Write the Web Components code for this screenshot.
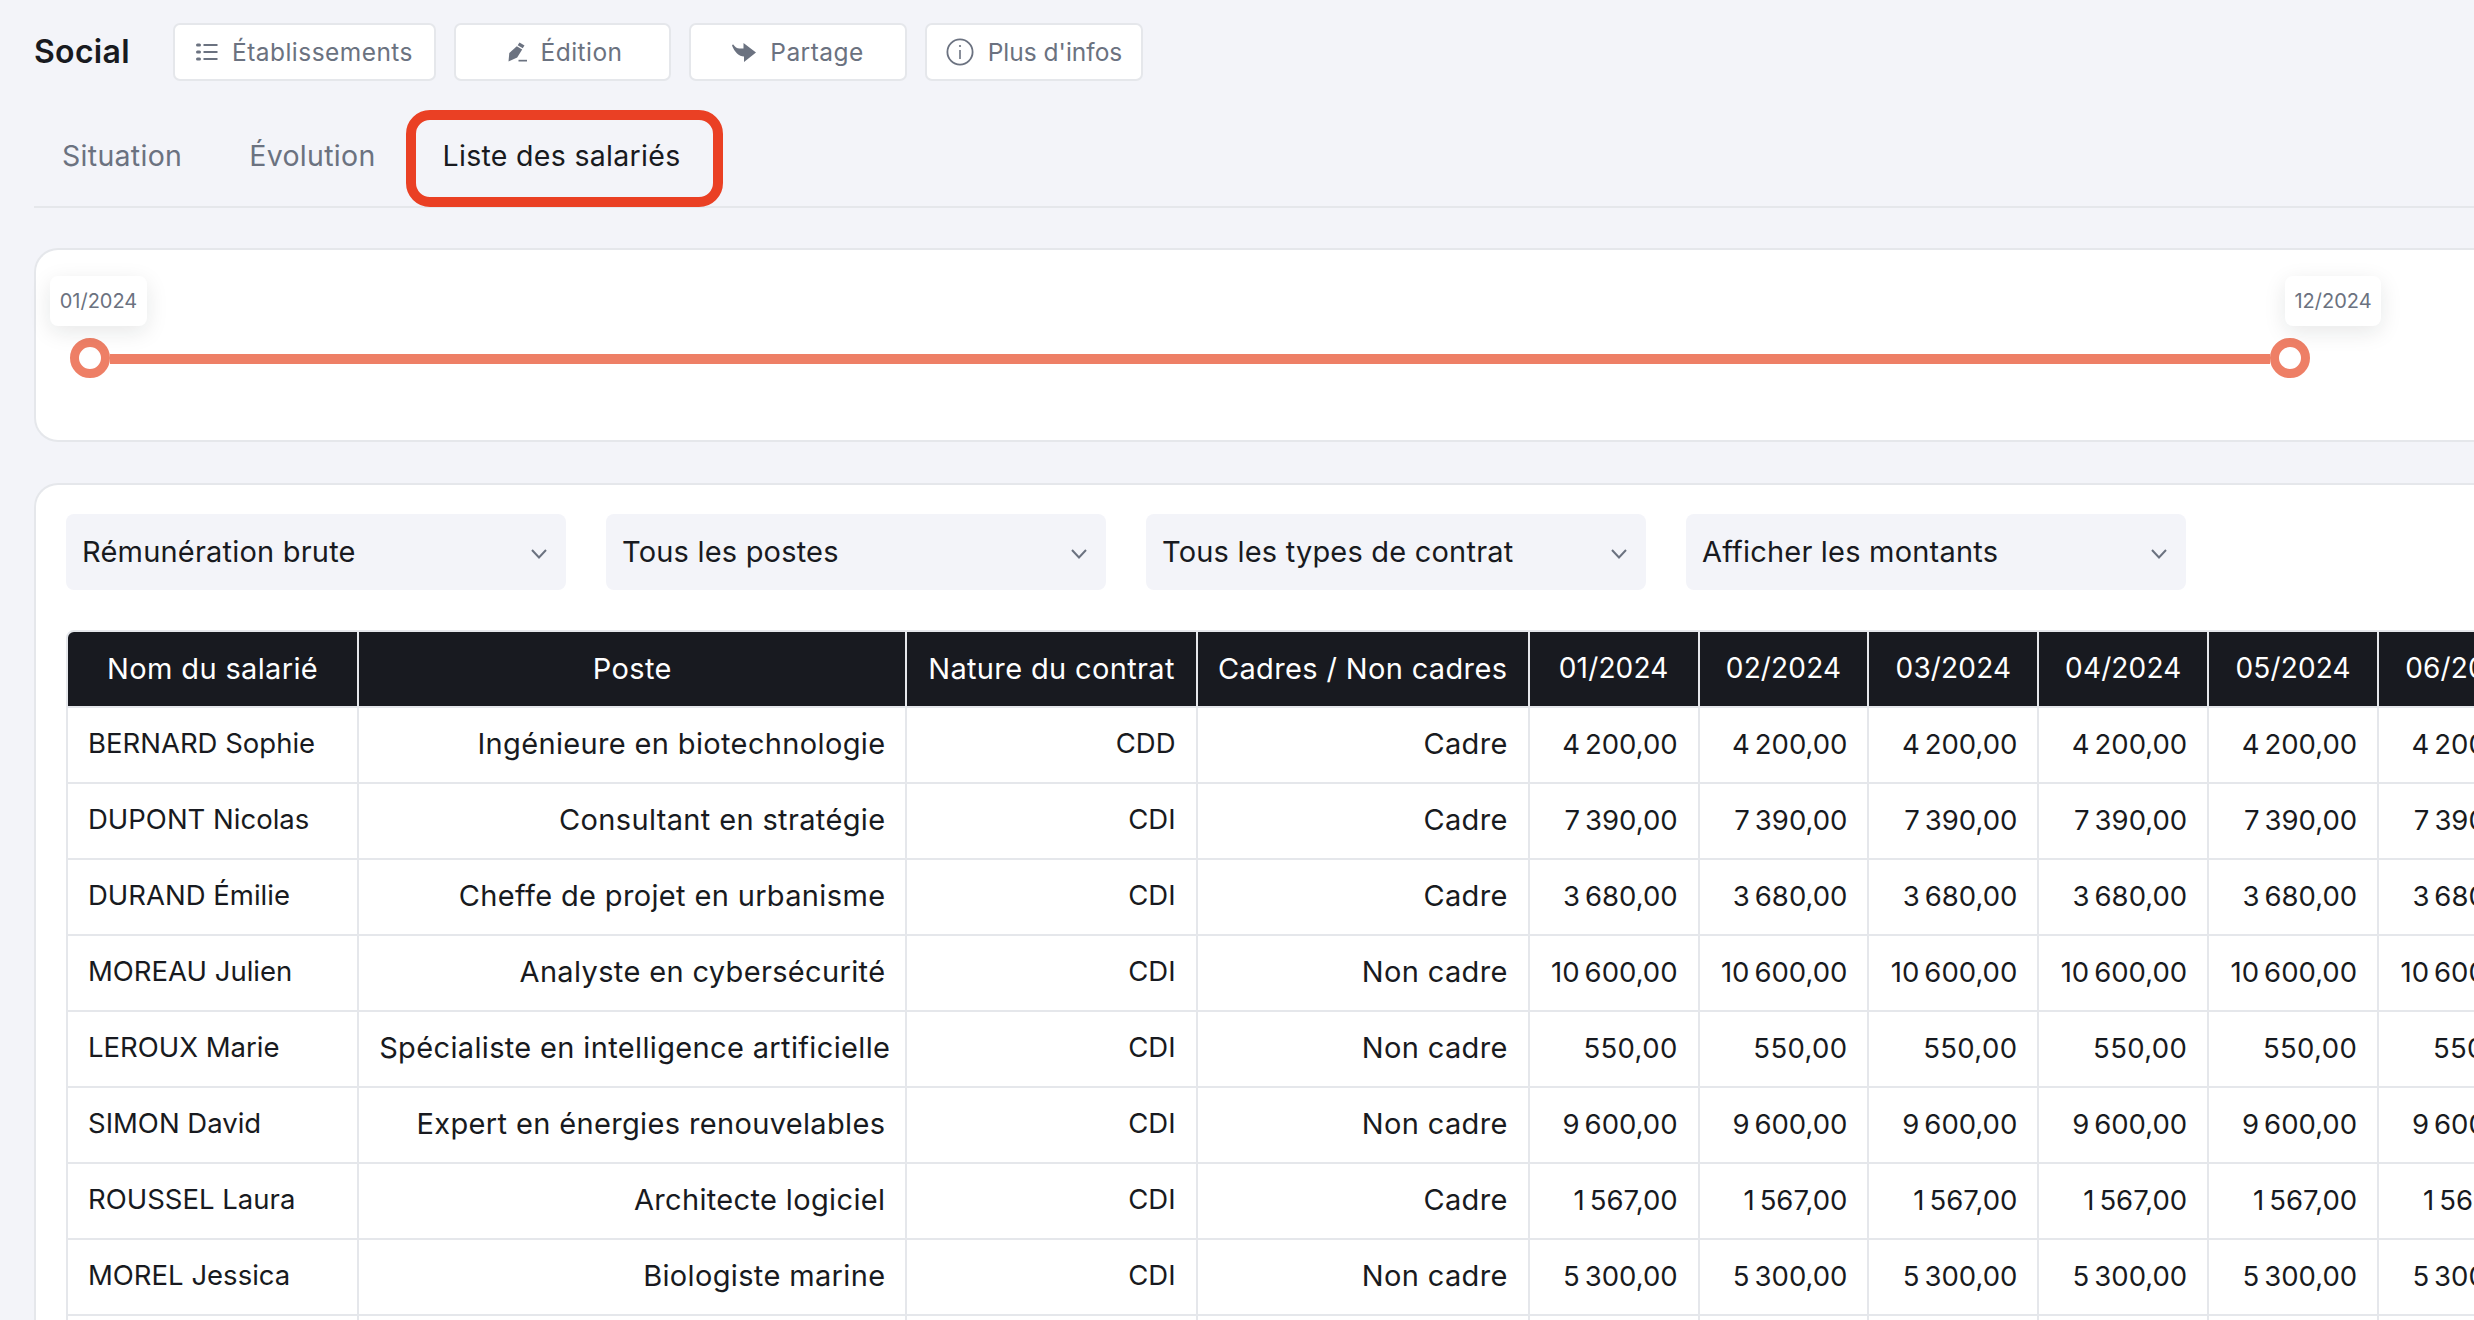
<!DOCTYPE html>
<html lang="fr">
<head>
<meta charset="utf-8">
<title>Social</title>
<style>
  html, body { margin: 0; height: 1320px; overflow: hidden; background: #f3f4f9; }
  body { font-family: "Inter", "Liberation Sans", sans-serif; color: #181a20; }
</style>
</head>
<body>
<social-page></social-page>

<script>
(() => {
    const FONT = `"Inter", "Liberation Sans", sans-serif`

    const ICONS = {
        list: `<svg width="22" height="22" viewBox="0 0 22 22" fill="none" stroke="currentColor" stroke-width="2"><path d="M7.5 4h14M7.5 11h14M7.5 18h14"/><path d="M1.500 4h2M1.500 11h2M1.500 18h2" stroke-width="3" stroke-linecap="round"/></svg>`,
        edit: `<svg width="19" height="20" viewBox="0 0 19 20" fill="currentColor"><path d="M11.500 .5l5 3-1.800 2.800-5-3z"/><path d="M8.800 4.300l5.400 3.300-5 8-8.700 3.800.8-8.500z"/><path d="M10.500 17.800h8.500v1.700h-8.500z"/></svg>`,
        share: `<svg width="24" height="19" viewBox="0 0 24 19" fill="currentColor"><path d="M0 2.500L1 1.200C3 4 5 5.500 7.500 5.500h4V0L24 9.500 12 19v-5.500C7 13.500 2.500 9 0 2.500z"/></svg>`,
        info: `<svg width="28" height="28" viewBox="0 0 28 28" fill="none" stroke="currentColor" stroke-width="1.800"><circle cx="14" cy="14" r="12.600"/><path d="M14 12v9" stroke-width="1.600"/><circle cx="14" cy="8" r="1.100" fill="currentColor" stroke="none"/></svg>`
    }

    class ToolButton extends HTMLElement {
        constructor(){
            super()
            const root = this.attachShadow({mode: 'open'})
            root.innerHTML = `
                <style>
                    :host {
                        display: inline-flex;
                        box-sizing: border-box;
                        height: 58px;
                        align-items: center;
                        justify-content: center;
                        gap: 14px;
                        background: #fff;
                        border: 2px solid #e5e7eb;
                        border-radius: 7px;
                        color: #6b7280;
                        font: 400 24.500px/1 ${FONT};
                        letter-spacing: .45px;
                    }
                    .icon { display: flex; }
                </style>
                <span class="icon">${ICONS[this.getAttribute("icon")] || ""}</span>
                <slot></slot>
            `
        }
    }

    class TabItem extends HTMLElement {
        constructor(){
            super()
            const root = this.attachShadow({mode: 'open'})
            root.innerHTML = `
                <style>
                    :host {
                        display: block;
                        position: relative;
                        padding: 0 28px 7px;
                        color: #6b7280;
                        font: 400 28.500px/86px ${FONT};
                        letter-spacing: .3px;
                    }
                    :host([active]) { color: #181a20; }
                    .mark {
                        display: none;
                        position: absolute;
                        top: -3px;
                        bottom: -1px;
                        left: -9px;
                        right: -15px;
                        border: 10px solid #ea4024;
                        border-radius: 24px;
                    }
                    :host([active]) .mark { display: block; }
                </style>
                <slot></slot>
                <span class="mark"></span>
            `
        }
    }

    class PageHeader extends HTMLElement {
        constructor(){
            super()
            const root = this.attachShadow({mode: 'open'})
            root.innerHTML = `
                <style>
                    :host { display: block; padding-top: 23px; }
                    .top { display: flex; align-items: center; gap: 18px; }
                    h1 {
                        margin: 0;
                        width: 121px;
                        font: 600 32px/58px ${FONT};
                        letter-spacing: .3px;
                        color: #181a20;
                    }
                    .tabs {
                        display: flex;
                        gap: 11px;
                        margin-top: 32px;
                        height: 93px;
                        border-bottom: 2px solid #e5e7eb;
                    }
                    .w263 { width: 263px; }
                    .w217 { width: 217px; padding-left: 5px; }
                    .w218 { width: 218px; }
                    .tight { letter-spacing: 0; }
                </style>
                <div class="top">
                    <h1>Social</h1>
                    <tool-button class="w263" icon="list">Établissements</tool-button>
                    <tool-button class="w217" icon="edit">Édition</tool-button>
                    <tool-button class="w218" icon="share">Partage</tool-button>
                    <tool-button class="w218 tight" icon="info">Plus d'infos</tool-button>
                </div>
                <div class="tabs">
                    <tab-item>Situation</tab-item>
                    <tab-item>Évolution</tab-item>
                    <tab-item active>Liste des salariés</tab-item>
                </div>
            `
        }
    }

    class RangeSlider extends HTMLElement {
        constructor(){
            super()
            const root = this.attachShadow({mode: 'open'})
            root.innerHTML = `
                <style>
                    :host {
                        display: block;
                        box-sizing: border-box;
                        height: 194px;
                        margin-top: 40px;
                        padding: 88px 0 0 34px;
                        background: #fff;
                        border: 2px solid #e5e7eb;
                        border-right: 0;
                        border-radius: 24px 0 0 24px;
                    }
                    .rail { display: flex; align-items: center; width: 2240px; }
                    .line { flex: 1; height: 10px; margin-top: 2px; background: #ee7f66; }
                    .thumb {
                        position: relative;
                        box-sizing: border-box;
                        width: 40px;
                        height: 40px;
                        border: 9px solid #ee7f66;
                        border-radius: 50%;
                        background: #fff;
                    }
                    .tip {
                        position: absolute;
                        top: -71px;
                        box-sizing: border-box;
                        height: 50px;
                        background: #fff;
                        border-radius: 8px;
                        box-shadow: 0 6px 22px rgba(24, 26, 32, .1);
                        color: #6b7280;
                        font: 400 20px/50px ${FONT};
                        text-align: center;
                        white-space: nowrap;
                    }
                    .tip.from { left: -29px; width: 97px; }
                    .tip.to { left: 6px; width: 96px; }
                </style>
                <div class="rail">
                    <div class="thumb"><span class="tip from">${this.getAttribute("from")}</span></div>
                    <div class="line"></div>
                    <div class="thumb"><span class="tip to">${this.getAttribute("to")}</span></div>
                </div>
            `
        }
    }

    class FilterSelect extends HTMLElement {
        constructor(){
            super()
            const root = this.attachShadow({mode: 'open'})
            root.innerHTML = `
                <style>
                    :host {
                        display: flex;
                        box-sizing: border-box;
                        width: 500px;
                        height: 76px;
                        align-items: center;
                        justify-content: space-between;
                        padding: 0 19px 2px 16px;
                        background: #f3f4f9;
                        border-radius: 8px;
                        color: #181a20;
                        font: 400 29px/1 ${FONT};
                        letter-spacing: .2px;
                    }
                    svg { margin-top: 6px; }
                </style>
                <slot></slot>
                <svg width="16" height="10" viewBox="0 0 16 10" fill="none" stroke="#6b7280" stroke-width="2"><path d="M1 1l7 7.500L15 1"/></svg>
            `
        }
    }

    const NAMES = [
        ["BERNARD Sophie", "Ingénieure en biotechnologie", "CDD", "Cadre", "4\u202f200,00"],
        ["DUPONT Nicolas", "Consultant en stratégie", "CDI", "Cadre", "7\u202f390,00"],
        ["DURAND Émilie", "Cheffe de projet en urbanisme", "CDI", "Cadre", "3\u202f680,00"],
        ["MOREAU Julien", "Analyste en cybersécurité", "CDI", "Non cadre", "10\u202f600,00"],
        ["LEROUX Marie", "Spécialiste en intelligence artificielle", "CDI", "Non cadre", "550,00"],
        ["SIMON David", "Expert en énergies renouvelables", "CDI", "Non cadre", "9\u202f600,00"],
        ["ROUSSEL Laura", "Architecte logiciel", "CDI", "Cadre", "1\u202f567,00"],
        ["MOREL Jessica", "Biologiste marine", "CDI", "Non cadre", "5\u202f300,00"]
    ]
    const MONTHS = ["01/2024", "02/2024", "03/2024", "04/2024", "05/2024", "06/2024"]

    class SalaryTable extends HTMLElement {
        constructor(){
            super()
            const root = this.attachShadow({mode: 'open'})
            const titles = ["Nom du salarié", "Poste", "Nature du contrat", "Cadres / Non cadres"]
            const head = titles.map(t => `<th>${t}</th>`).join("")
                + MONTHS.map(t => `<th class="num">${t}</th>`).join("")
            const rows = NAMES.map(([name, job, contract, level, amount]) => `
                <tr>
                    <td class="left plain">${name}</td>
                    <td>${job}</td>
                    <td class="plain">${contract}</td>
                    <td>${level}</td>
                    ${MONTHS.map(() => `<td class="num">${amount}</td>`).join("")}
                </tr>`).join("")
            const blank = `<tr>${"<td></td>".repeat(titles.length + MONTHS.length)}</tr>`
            root.innerHTML = `
                <style>
                    :host { display: block; margin-top: 40px; }
                    table {
                        table-layout: fixed;
                        border-collapse: separate;
                        border-spacing: 0;
                        width: 2483px;
                        font: 400 29px/1 ${FONT};
                        letter-spacing: .35px;
                        color: #181a20;
                    }
                    th, td {
                        box-sizing: border-box;
                        border-right: 2px solid #e5e7eb;
                        border-bottom: 2px solid #e5e7eb;
                        white-space: nowrap;
                    }
                    th:first-child, td:first-child { border-left: 2px solid #e5e7eb; }
                    th {
                        height: 78px;
                        padding: 0 0 2px;
                        background: #181a20;
                        color: #fff;
                        font-weight: 400;
                        border-top: 2px solid #e5e7eb;
                    }
                    th:first-child { border-top-left-radius: 8px; }
                    td {
                        height: 76px;
                        padding: 0 20px 3px 20px;
                        text-align: right;
                    }
                    td.left { text-align: left; }
                    td.plain { font-size: 27.500px; letter-spacing: 0; }
                    th.num { font-size: 28px; letter-spacing: .15px; }
                    td.num { font-size: 27.500px; letter-spacing: .35px; padding-bottom: 0; }
                </style>
                <table>
                    <colgroup>
                        <col style="width:293px"><col style="width:548px"><col style="width:290px"><col style="width:332px">
                        <col style="width:169.800px"><col style="width:169.800px"><col style="width:169.800px"><col style="width:169.800px"><col style="width:169.800px"><col style="width:169.800px">
                    </colgroup>
                    <thead><tr>${head}</tr></thead>
                    <tbody>${rows}${blank}</tbody>
                </table>
            `
        }
    }

    class DataCard extends HTMLElement {
        constructor(){
            super()
            const root = this.attachShadow({mode: 'open'})
            root.innerHTML = `
                <style>
                    :host {
                        display: block;
                        box-sizing: border-box;
                        margin-top: 41px;
                        padding: 29px 0 0 30px;
                        background: #fff;
                        border: 2px solid #e5e7eb;
                        border-right: 0;
                        border-radius: 24px 0 0 0;
                    }
                    .filters { display: flex; gap: 40px; }
                </style>
                <div class="filters">
                    <filter-select>Rémunération brute</filter-select>
                    <filter-select>Tous les postes</filter-select>
                    <filter-select>Tous les types de contrat</filter-select>
                    <filter-select>Afficher les montants</filter-select>
                </div>
                <salary-table></salary-table>
            `
        }
    }

    class SocialPage extends HTMLElement {
        constructor(){
            super()
            const root = this.attachShadow({mode: 'open'})
            root.innerHTML = `
                <style>
                    :host { display: block; padding-left: 34px; height: 1320px; overflow: hidden; }
                </style>
                <page-header></page-header>
                <range-slider from="01/2024" to="12/2024"></range-slider>
                <data-card></data-card>
            `
        }
    }

    customElements.define("tool-button", ToolButton)
    customElements.define("tab-item", TabItem)
    customElements.define("page-header", PageHeader)
    customElements.define("range-slider", RangeSlider)
    customElements.define("filter-select", FilterSelect)
    customElements.define("salary-table", SalaryTable)
    customElements.define("data-card", DataCard)
    customElements.define("social-page", SocialPage)
})()
</script>
</body>
</html>
